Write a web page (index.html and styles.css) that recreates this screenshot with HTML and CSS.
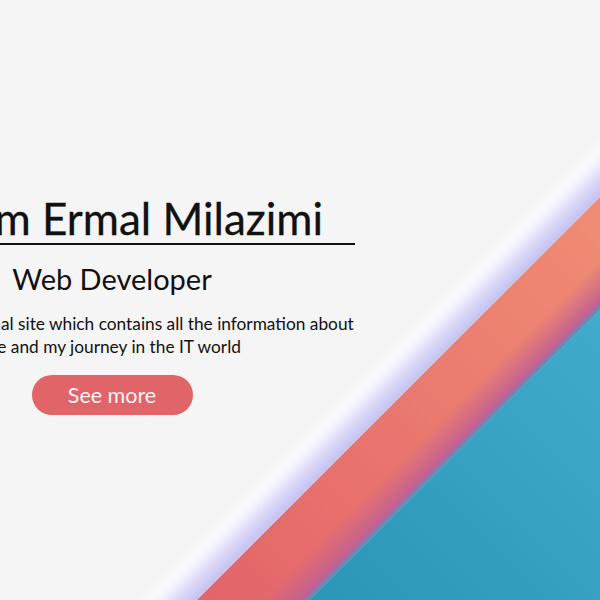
FILE: index.html
```html
<!DOCTYPE html>
<html lang="en">
<head>
<meta charset="utf-8">
<title>Ermal Milazimi</title>
<link rel="stylesheet" href="styles.css">
</head>
<body>
<section class="hero">
  <svg class="hero-bg" viewBox="0 0 600 600" width="600" height="600" aria-hidden="true">
    <defs>
      <linearGradient id="glow" x1="368" y1="368" x2="398.5" y2="398.5" gradientUnits="userSpaceOnUse">
        <stop offset="0" stop-color="#ffffff" stop-opacity="0"/>
        <stop offset="0.3" stop-color="#faf9ff" stop-opacity="0.9"/>
        <stop offset="0.65" stop-color="#dcdaf8"/>
        <stop offset="1" stop-color="#c2bff0"/>
      </linearGradient>
      <linearGradient id="salmon" x1="197" y1="600" x2="600" y2="197" gradientUnits="userSpaceOnUse">
        <stop offset="0" stop-color="#e3646a"/>
        <stop offset="1" stop-color="#f08d73"/>
      </linearGradient>
      <linearGradient id="purple" x1="430" y1="430" x2="452" y2="452" gradientUnits="userSpaceOnUse">
        <stop offset="0" stop-color="#c8648a" stop-opacity="0"/>
        <stop offset="1" stop-color="#bd5f97"/>
      </linearGradient>
      <linearGradient id="teal" x1="310" y1="600" x2="600" y2="310" gradientUnits="userSpaceOnUse">
        <stop offset="0" stop-color="#2a97b6"/>
        <stop offset="1" stop-color="#41abcb"/>
      </linearGradient>
      <linearGradient id="tealEdge" x1="450" y1="450" x2="455" y2="455" gradientUnits="userSpaceOnUse">
        <stop offset="0" stop-color="#8a7fa8" stop-opacity="0"/>
        <stop offset="1" stop-color="#3aa3c2"/>
      </linearGradient>
      <filter id="soft" x="-10%" y="-10%" width="120%" height="120%">
        <feGaussianBlur stdDeviation="1.5"/>
      </filter>
    </defs>
    <polygon points="620,116 620,178 178,620 116,620" fill="url(#glow)" filter="url(#soft)"/>
    <polygon points="620,177 620,290 290,620 177,620" fill="url(#salmon)"/>
    <polygon points="620,240 620,290 290,620 240,620" fill="url(#purple)"/>
    <polygon points="620,280 620,290 290,620 280,620" fill="url(#tealEdge)"/>
    <polygon points="620,290 620,620 290,620" fill="url(#teal)"/>
  </svg>
  <div class="intro">
    <h1 class="intro-title">I am Ermal Milazimi</h1>
    <h2 class="intro-role">Web Developer</h2>
    <p class="intro-text">This is my personal site which contains all the information about me and my journey in the IT world</p>
    <a class="intro-btn" href="#">See more</a>
  </div>
</section>
</body>
</html>
```
FILE: styles.css
```css
* { box-sizing: border-box; }
html, body { margin: 0; padding: 0; }
body {
  background: #f5f5f5;
  font-family: "Lato", "Noto Sans", sans-serif;
  color: #111;
  overflow: hidden;
}
.hero {
  position: relative;
  width: 600px;
  height: 600px;
  overflow: hidden;
}
.hero-bg {
  position: absolute;
  inset: 0;
  display: block;
}
.intro {
  position: relative;
  width: 486px;
  margin-left: -131px;
  padding-top: 194px;
  display: flex;
  flex-direction: column;
  align-items: center;
  text-align: center;
}
.intro-title {
  align-self: stretch;
  margin: 0;
  padding-right: 32px;
  font-size: 44px;
  font-weight: 400;
  line-height: 49px;
  text-align: right;
  border-bottom: 2px solid #111;
  color: #111;
  -webkit-text-stroke: 0.3px #111;
}
.intro-role {
  margin: 16px 0 0;
  font-size: 29px;
  font-weight: 400;
  line-height: 36px;
}
.intro-text {
  margin: 15px 0 0;
  font-size: 17.3px;
  line-height: 23px;
}
.intro-btn {
  margin-top: 17px;
  width: 161px;
  height: 40px;
  border-radius: 20px;
  background: #e06468;
  color: #fdf4f4;
  font-size: 21.5px;
  line-height: 40px;
  text-decoration: none;
}
```
